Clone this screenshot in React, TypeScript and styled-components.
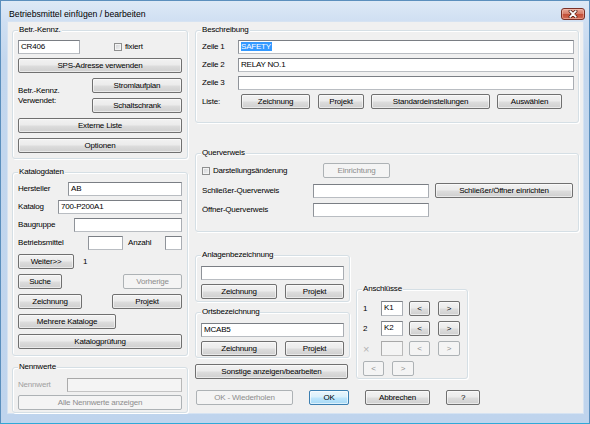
import React from "react";
import styled, { createGlobalStyle, css } from "styled-components";

const GlobalStyle = createGlobalStyle`
  html, body { margin: 0; padding: 0; background: #ffffff; }
  #root { width: 590px; height: 424px; }
`;

const FONT = `"Liberation Sans", Arial, sans-serif`;

const Window = styled.div`
  width: 590px;
  height: 424px;
  box-sizing: border-box;
  border: 1px solid #5b8fbd;
  border-bottom-color: #2fa9d8;
  background: linear-gradient(180deg, #dde9f6 0px, #cfdff2 21px, #c3d7ee 60px, #bfd4ed 100%);
  display: flex;
  flex-direction: column;
  padding: 0 6px 10px 7px;
  font-family: ${FONT};
  font-size: 8px;
  letter-spacing: -0.2px;
  color: #000;
`;

const TitleBar = styled.div`
  height: 21px;
  display: flex;
  align-items: flex-start;
  justify-content: space-between;
`;

const TitleText = styled.div`
  margin: 8px 0 0 1px;
  font-size: 8.7px;
  line-height: 11px;
  letter-spacing: 0;
  color: #000;
`;

const CloseButton = styled.div`
  margin: 7px -2px 0 0;
  width: 24px;
  height: 12px;
  box-sizing: border-box;
  border: 1px solid #7b3026;
  border-radius: 3px;
  background: linear-gradient(180deg, #e9a898 0%, #d8806c 45%, #c3503a 55%, #d36a52 100%);
  box-shadow: inset 0 0 0 1px rgba(255, 210, 200, 0.45);
  display: flex;
  align-items: center;
  justify-content: center;
`;

const Client = styled.div`
  flex: 1;
  background: #f0f0f0;
  display: flex;
  gap: 7px;
  padding: 8px 0 0 4px;
  box-shadow: 0 0 0 1px #d6e3f2;
`;

const Column = styled.div<{ $w: number }>`
  width: ${(p) => p.$w}px;
  flex: 0 0 auto;
  display: flex;
  flex-direction: column;
`;

const GroupBox = styled.div<{ $mt?: number; $ml?: number; $w?: number }>`
  margin-top: ${(p) => p.$mt ?? 0}px;
  margin-left: ${(p) => p.$ml ?? 0}px;
  ${(p) => (p.$w ? `width: ${p.$w}px; box-sizing: border-box;` : "")}
  border: 1px solid #d5dfe5;
  border-radius: 3px;
  box-shadow: inset 1px 1px 0 #ffffff, 1px 1px 0 #ffffff;
  display: flex;
  flex-direction: column;
`;

const GroupTitle = styled.div`
  align-self: flex-start;
  margin: -6px 0 0 5px;
  padding: 0 1px;
  height: 10px;
  line-height: 10px;
  background: #f0f0f0;
  white-space: nowrap;
`;

const Body = styled.div<{ $pt: number; $pr: number; $pb: number; $pl: number }>`
  display: flex;
  flex-direction: column;
  padding: ${(p) => `${p.$pt}px ${p.$pr}px ${p.$pb}px ${p.$pl}px`};
`;

const Row = styled.div<{ $mt?: number; $gap?: number; $between?: boolean }>`
  display: flex;
  align-items: center;
  margin-top: ${(p) => p.$mt ?? 0}px;
  gap: ${(p) => p.$gap ?? 0}px;
  ${(p) => (p.$between ? "justify-content: space-between;" : "")}
`;

const Stack = styled.div<{ $gap: number }>`
  display: flex;
  flex-direction: column;
  gap: ${(p) => p.$gap}px;
`;

const Label = styled.span<{ $w?: number; $ml?: number; $disabled?: boolean }>`
  ${(p) => (p.$w ? `width: ${p.$w}px;` : "")}
  margin-left: ${(p) => p.$ml ?? 0}px;
  flex: 0 0 auto;
  line-height: 10px;
  white-space: nowrap;
  color: ${(p) => (p.$disabled ? "#a0a0a0" : "#000")};
`;

const TextBox = styled.div<{ $w?: number; $ml?: number; $disabled?: boolean; $h?: number }>`
  box-sizing: border-box;
  height: ${(p) => p.$h ?? 14}px;
  ${(p) => (p.$w ? `width: ${p.$w}px; flex: 0 0 auto;` : "flex: 1 1 auto;")}
  margin-left: ${(p) => (p.$ml === -1 ? "auto" : `${p.$ml ?? 0}px`)};
  border: 1px solid;
  border-color: #7a7e84 #a9adb3 #b9bdc2 #8f9399;
  background: #ffffff;
  padding: 0 2px;
  line-height: 12px;
  white-space: nowrap;
  overflow: hidden;
  ${(p) =>
    p.$disabled &&
    css`
      background: #f4f4f4;
      border-color: #a8a8a8 #b8b8b8 #c4c4c4 #ababab;
    `}
`;

const Selected = styled.span`
  background: #3399ff;
  color: #ffffff;
  padding: 0 1px 0 0;
`;

const Button = styled.button<{ $w?: number; $ml?: number; $mt?: number; $default?: boolean }>`
  box-sizing: border-box;
  height: 15px;
  width: ${(p) => (p.$w ? `${p.$w}px` : "100%")};
  flex: 0 0 auto;
  margin: ${(p) => `${p.$mt ?? 0}px 0 0 ${p.$ml === -1 ? "auto" : `${p.$ml ?? 0}px`}`};
  padding: 0;
  font-family: inherit;
  font-size: inherit;
  letter-spacing: inherit;
  line-height: 13px;
  color: #000;
  border: 1px solid #707070;
  border-radius: 2px;
  background: linear-gradient(180deg, #f2f2f2 0%, #ebebeb 48%, #dddddd 52%, #cfcfcf 100%);
  box-shadow: inset 0 0 0 1px rgba(255, 255, 255, 0.55);
  white-space: nowrap;
  text-align: center;
  ${(p) =>
    p.$default &&
    css`
      border-color: #3c7fb1;
      background: linear-gradient(180deg, #eaf6fd 0%, #d9f0fc 48%, #bee6fd 52%, #a7d9f5 100%);
      box-shadow: inset 0 0 0 1px rgba(255, 255, 255, 0.6);
    `}
  &:disabled {
    color: #8d8d8d;
    border-color: #adb2b5;
    background: #f4f4f4;
    box-shadow: none;
  }
`;

const CheckBox = styled.span`
  display: inline-block;
  box-sizing: border-box;
  width: 8px;
  height: 8px;
  flex: 0 0 auto;
  border: 1px solid #8e8f8f;
  background: linear-gradient(135deg, #cfd1d4 0%, #f4f4f4 100%);
  box-shadow: inset 0 0 0 1px #f3f3f3;
`;

const CheckLabel = styled.span<{ $w?: number; $ml?: number }>`
  display: flex;
  align-items: center;
  gap: 3px;
  ${(p) => (p.$w ? `width: ${p.$w}px;` : "")}
  margin-left: ${(p) => p.$ml ?? 0}px;
  flex: 0 0 auto;
  line-height: 10px;
  white-space: nowrap;
`;

const LabelBlock = styled.div<{ $w: number }>`
  width: ${(p) => p.$w}px;
  flex: 0 0 auto;
  line-height: 10px;
`;

const LowerArea = styled.div`
  display: flex;
  align-items: flex-start;
  margin-top: 23px;
`;

const PinLabel = styled.span<{ $disabled?: boolean }>`
  width: 18px;
  flex: 0 0 auto;
  line-height: 10px;
  font-size: ${(p) => (p.$disabled ? "11px" : "inherit")};
  color: ${(p) => (p.$disabled ? "#b4b4b4" : "#000")};
`;

function CloseIcon() {
  return (
    <svg width="10" height="8" viewBox="0 0 10 8">
      <path d="M2.2 1.2 L7.8 6.8 M7.8 1.2 L2.2 6.8" stroke="#4a1810" strokeWidth="3.2" strokeLinecap="round" />
      <path d="M2.2 1.2 L7.8 6.8 M7.8 1.2 L2.2 6.8" stroke="#ffffff" strokeWidth="1.8" strokeLinecap="round" />
    </svg>
  );
}

function PinRow({ label, value, disabled, mt }: { label: string; value?: string; disabled?: boolean; mt?: number }) {
  return (
    <Row $mt={mt}>
      <PinLabel $disabled={disabled}>{label}</PinLabel>
      <TextBox $w={22} $h={15} $disabled={disabled}>
        {value}
      </TextBox>
      <Button $w={21} $ml={6} disabled={disabled}>
        &lt;
      </Button>
      <Button $w={22} $ml={8} disabled={disabled}>
        &gt;
      </Button>
    </Row>
  );
}

export default function App() {
  return (
    <>
      <GlobalStyle />
      <Window>
        <TitleBar>
          <TitleText>Betriebsmittel einfügen / bearbeiten</TitleText>
          <CloseButton>
            <CloseIcon />
          </CloseButton>
        </TitleBar>
        <Client>
          <Column $w={176}>
            <GroupBox>
              <GroupTitle>Betr.-Kennz.</GroupTitle>
              <Body $pt={5} $pr={5} $pb={5} $pl={5}>
                <Row>
                  <TextBox $w={62}>CR406</TextBox>
                  <CheckLabel $ml={34}>
                    <CheckBox />
                    fixiert
                  </CheckLabel>
                </Row>
                <Button $mt={4}>SPS-Adresse verwenden</Button>
                <Row $mt={5}>
                  <LabelBlock $w={74}>
                    Betr.-Kennz.
                    <br />
                    Verwendet:
                  </LabelBlock>
                  <Stack $gap={5}>
                    <Button $w={90}>Stromlaufplan</Button>
                    <Button $w={90}>Schaltschrank</Button>
                  </Stack>
                </Row>
                <Button $mt={5}>Externe Liste</Button>
                <Button $mt={5}>Optionen</Button>
              </Body>
            </GroupBox>

            <GroupBox $mt={13}>
              <GroupTitle>Katalogdaten</GroupTitle>
              <Body $pt={5} $pr={5} $pb={6} $pl={5}>
                <Row>
                  <Label $w={50}>Hersteller</Label>
                  <TextBox>AB</TextBox>
                </Row>
                <Row $mt={4}>
                  <Label $w={40}>Katalog</Label>
                  <TextBox>700-P200A1</TextBox>
                </Row>
                <Row $mt={4}>
                  <Label $w={56}>Baugruppe</Label>
                  <TextBox />
                </Row>
                <Row $mt={4}>
                  <Label $w={70}>Betriebsmittel</Label>
                  <TextBox $w={35} />
                  <Label $ml={5}>Anzahl</Label>
                  <TextBox $w={17} $ml={-1} />
                </Row>
                <Row $mt={4}>
                  <Button $w={56}>Weiter&gt;&gt;</Button>
                  <Label $ml={9}>1</Label>
                </Row>
                <Row $mt={5}>
                  <Button $w={44}>Suche</Button>
                  <Button $w={59} $ml={-1} disabled>
                    Vorherige
                  </Button>
                </Row>
                <Row $mt={5}>
                  <Button $w={64}>Zeichnung</Button>
                  <Button $w={70} $ml={-1}>
                    Projekt
                  </Button>
                </Row>
                <Row $mt={5}>
                  <Button $w={98}>Mehrere Kataloge</Button>
                </Row>
                <Button $mt={5}>Katalogprüfung</Button>
              </Body>
            </GroupBox>

            <GroupBox $mt={11}>
              <GroupTitle>Nennwerte</GroupTitle>
              <Body $pt={6} $pr={5} $pb={2} $pl={5}>
                <Row>
                  <Label $w={49} $disabled>
                    Nennwert
                  </Label>
                  <TextBox $disabled />
                </Row>
                <Button $mt={3} disabled>
                  Alle Nennwerte anzeigen
                </Button>
              </Body>
            </GroupBox>
          </Column>

          <Column $w={384}>
            <GroupBox>
              <GroupTitle>Beschreibung</GroupTitle>
              <Body $pt={5} $pr={4} $pb={13} $pl={6}>
                <Row>
                  <Label $w={36}>Zeile 1</Label>
                  <TextBox>
                    <Selected>SAFETY</Selected>
                  </TextBox>
                </Row>
                <Row $mt={4}>
                  <Label $w={36}>Zeile 2</Label>
                  <TextBox>RELAY NO.1</TextBox>
                </Row>
                <Row $mt={4}>
                  <Label $w={36}>Zeile 3</Label>
                  <TextBox />
                </Row>
                <Row $mt={4}>
                  <Label $w={39}>Liste:</Label>
                  <Button $w={69}>Zeichnung</Button>
                  <Button $w={46} $ml={8}>
                    Projekt
                  </Button>
                  <Button $w={119} $ml={7}>
                    Standardeinstellungen
                  </Button>
                  <Button $w={65} $ml={7}>
                    Auswählen
                  </Button>
                </Row>
              </Body>
            </GroupBox>

            <GroupBox $mt={30}>
              <GroupTitle>Querverweis</GroupTitle>
              <Body $pt={5} $pr={5} $pb={14} $pl={6}>
                <Row>
                  <CheckLabel $w={121}>
                    <CheckBox />
                    Darstellungsänderung
                  </CheckLabel>
                  <Button $w={67} disabled>
                    Einrichtung
                  </Button>
                </Row>
                <Row $mt={5}>
                  <Label $w={111}>Schließer-Querverweis</Label>
                  <TextBox $w={116} />
                  <Button $w={138} $ml={6}>
                    Schließer/Öffner einrichten
                  </Button>
                </Row>
                <Row $mt={5}>
                  <Label $w={111}>Öffner-Querverweis</Label>
                  <TextBox $w={116} />
                </Row>
              </Body>
            </GroupBox>

            <LowerArea>
              <Stack $gap={0}>
                <GroupBox $w={155}>
                  <GroupTitle>Anlagenbezeichnung</GroupTitle>
                  <Body $pt={6} $pr={5} $pb={2} $pl={5}>
                    <TextBox />
                    <Row $mt={4} $between>
                      <Button $w={76}>Zeichnung</Button>
                      <Button $w={59}>Projekt</Button>
                    </Row>
                  </Body>
                </GroupBox>
                <GroupBox $w={155} $mt={10}>
                  <GroupTitle>Ortsbezeichnung</GroupTitle>
                  <Body $pt={6} $pr={5} $pb={1} $pl={5}>
                    <TextBox>MCAB5</TextBox>
                    <Row $mt={4} $between>
                      <Button $w={76}>Zeichnung</Button>
                      <Button $w={59}>Projekt</Button>
                    </Row>
                  </Body>
                </GroupBox>
                <Button $w={153} $mt={6}>
                  Sonstige anzeigen/bearbeiten
                </Button>
              </Stack>

              <GroupBox $w={112} $mt={34} $ml={6}>
                <GroupTitle>Anschlüsse</GroupTitle>
                <Body $pt={7} $pr={5} $pb={2} $pl={6}>
                  <PinRow label="1" value="K1" />
                  <PinRow label="2" value="K2" mt={5} />
                  <PinRow label="×" disabled mt={5} />
                  <Row $mt={5}>
                    <Button $w={21} disabled>
                      &lt;
                    </Button>
                    <Button $w={22} $ml={8} disabled>
                      &gt;
                    </Button>
                  </Row>
                </Body>
              </GroupBox>
            </LowerArea>

            <Row $mt={11}>
              <Button $w={97} $ml={1} disabled>
                OK - Wiederholen
              </Button>
              <Button $w={40} $ml={16} $default>
                OK
              </Button>
              <Button $w={65} $ml={16}>
                Abbrechen
              </Button>
              <Button $w={34} $ml={16}>
                ?
              </Button>
            </Row>
          </Column>
        </Client>
      </Window>
    </>
  );
}
